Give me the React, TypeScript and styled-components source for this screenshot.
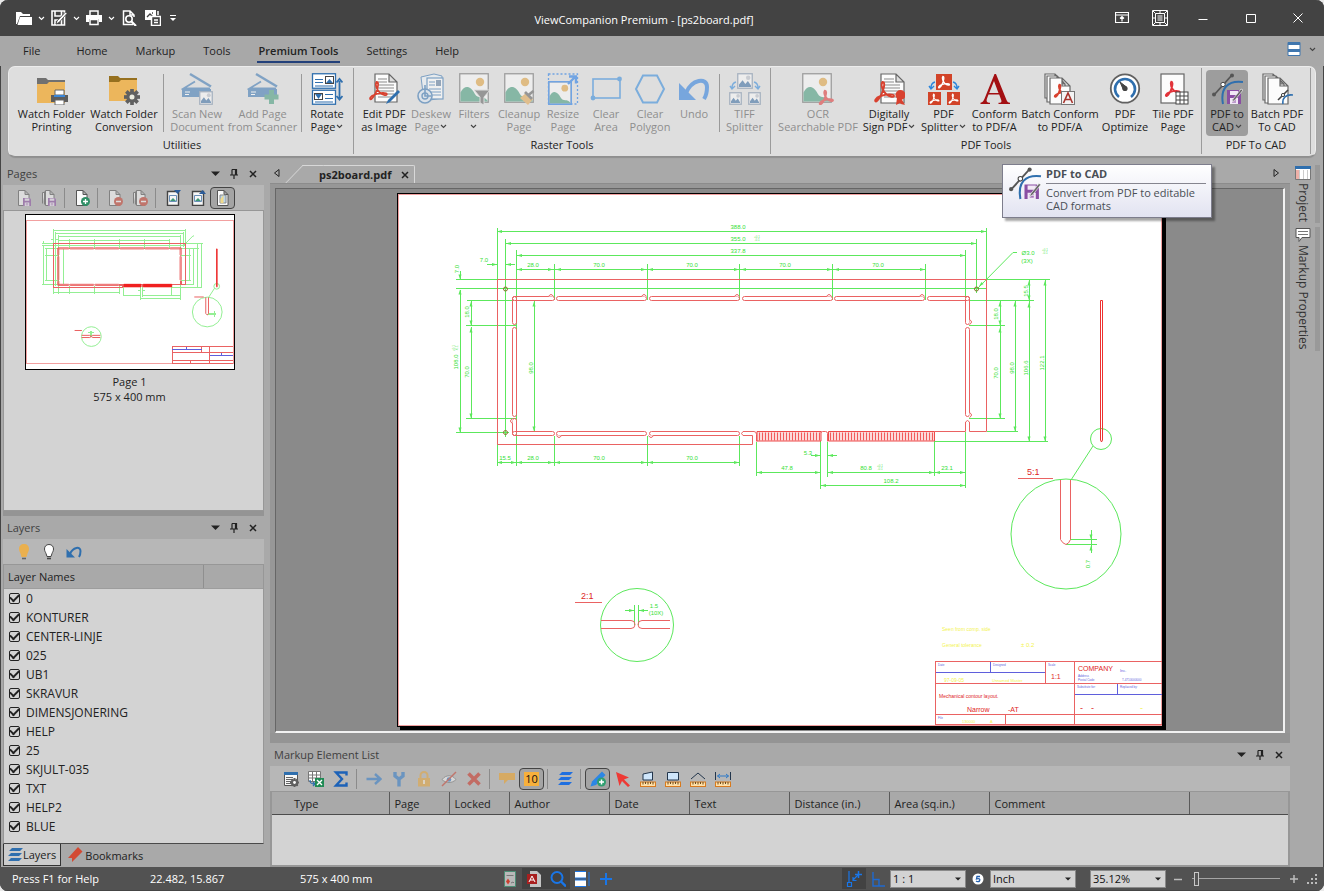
import React, { ReactNode } from "react";
import styled, { createGlobalStyle, css } from "styled-components";

const UI_FONT = `"Open Sans", "Noto Sans", "Liberation Sans", sans-serif`;
const CHROME = "#a9a9a9";
const BAR = "#b7b7b7";
const PAPER = "#d3d3d3";
const EDGE = "#979797";
const INK = "#222222";

const GlobalStyle = createGlobalStyle`
  * { box-sizing: border-box; }
  body { margin: 0; background: #e9e9e9; }
  button, select, input { font: inherit; color: inherit; margin: 0; }
  button { padding: 0; border: 0; background: none; }
  svg { display: block; flex: none; }
`;

/* ---------- window ---------- */

const Window = styled.div`
  display: flex;
  flex-direction: column;
  min-height: 100vh;
  overflow: hidden;
  border-radius: 8px;
  background: ${CHROME};
  box-shadow: inset 1px 0 0 #454545, inset -1px 0 0 #454545;
  font-family: ${UI_FONT};
  font-size: 11px;
  line-height: 13px;
  color: ${INK};
`;

const TitleBar = styled.header`
  display: flex;
  align-items: center;
  height: 36px;
  padding: 0 3px 0 12px;
  background: #434343;
  color: #ffffff;
`;

const Title = styled.h1`
  flex: 1;
  margin: 0;
  padding: 3px 0 0 4px;
  font-size: 11px;
  font-weight: 400;
  text-align: center;
`;

const BarButton = styled.button<{ $w: number }>`
  display: flex;
  align-items: center;
  justify-content: center;
  width: ${(p) => p.$w}px;
  height: 36px;
`;

const MenuBar = styled.nav`
  display: flex;
  align-items: center;
  height: 30px;
  padding: 0 8px 0 9px;
  background: #a8a8a8;
`;

const MenuTab = styled.button<{ $active?: boolean; $wide?: boolean }>`
  height: 24px;
  padding: 5px 2px 4px;
  margin: 0 ${(p) => (p.$wide ? 20 : 12)}px 0 12px;
  border-bottom: 2px solid transparent;
  ${(p) =>
    p.$active &&
    css`
      font-weight: 600;
      border-color: #23407a;
    `}
`;

const MenuEnd = styled.div`
  display: flex;
  align-items: center;
  gap: 8px;
  margin-left: auto;
  padding-bottom: 4px;
`;

/* ---------- ribbon ---------- */

const Ribbon = styled.section`
  display: flex;
  height: 91px;
  margin: 0 8px;
  border: 1px solid #ececec;
  border-bottom-color: #8f8f8f;
  border-radius: 7px;
  background: #dedede;
  box-shadow: 0 1px 1px #909090;
`;

const Group = styled.div`
  display: flex;
  flex-direction: column;
  align-items: center;
  margin: 1px 0 2px;
  padding: 2px 4px 0;
  border-right: 1px solid #9b9b9b;
  &:first-child {
    padding-left: 6px;
  }
`;

const GroupRow = styled.div`
  display: flex;
  align-items: center;
`;

const GroupLabel = styled.div`
  margin-top: 2px;
`;

const Tool = styled.button<{ $w: number; $on?: boolean }>`
  display: flex;
  flex-direction: column;
  align-items: center;
  width: ${(p) => p.$w}px;
  height: 66px;
  padding-top: 3px;
  border-radius: 4px;
  background: ${(p) => (p.$on ? "#9d9d9d" : "transparent")};
  white-space: nowrap;
  &:disabled {
    color: #8e8e8e;
  }
  &:disabled > svg {
    opacity: 0.55;
  }
`;

const ToolText = styled.span`
  display: flex;
  flex-direction: column;
  align-items: center;
  margin-top: 2px;
`;

const ToolLine = styled.span`
  display: flex;
  align-items: center;
  gap: 1px;
  height: 13px;
`;

const Divider = styled.span`
  width: 1px;
  height: 58px;
  margin: 0 3px;
  background: #9a9a9a;
`;

/* ---------- workspace ---------- */

const Workspace = styled.main`
  position: relative;
  display: flex;
  flex: 1;
  padding-left: 3px;
`;

const Dock = styled.aside`
  display: flex;
  flex-direction: column;
  width: 267px;
  padding: 5px 6px 0 0;
`;

const Panel = styled.section<{ $grow?: boolean }>`
  display: flex;
  flex-direction: column;
  flex: ${(p) => (p.$grow ? "1" : "none")};
`;

const PanelHead = styled.div<{ $right?: number }>`
  display: flex;
  align-items: center;
  gap: 7px;
  height: 23px;
  padding: 0 ${(p) => p.$right ?? 5}px 0 4px;
  color: #3f3f3f;
`;

const PanelTitle = styled.h2`
  flex: 1;
  margin: 0;
  font-size: 11px;
  font-weight: 400;
`;

const PanelButton = styled.button`
  display: flex;
  align-items: center;
  justify-content: center;
  width: 12px;
  height: 14px;
`;

const ToolStrip = styled.div`
  display: flex;
  align-items: center;
  height: 25px;
  padding-left: 8px;
  background: ${BAR};
`;

const StripDivider = styled.span`
  width: 1px;
  height: 20px;
  margin: 0 4px 0 3px;
  background: #8b8b8b;
`;

const StripButton = styled.button<{ $on?: boolean }>`
  display: flex;
  align-items: center;
  justify-content: center;
  width: 25px;
  height: 22px;
  border: 1px solid ${(p) => (p.$on ? "#444444" : "transparent")};
  border-radius: 4px;
  background: ${(p) => (p.$on ? "#a4a4a4" : "transparent")};
  &:disabled > svg {
    opacity: 0.55;
  }
`;

const Thumbs = styled.div`
  display: flex;
  flex: 1;
  flex-direction: column;
  align-items: center;
  padding: 3px 8px 0 0;
  border: 1px solid ${EDGE};
  background: ${PAPER};
`;

const Thumb = styled.figure`
  margin: 0;
  text-align: center;
  line-height: 15px;
`;

const ThumbPage = styled.div`
  width: 210px;
  margin-bottom: 4px;
  border: 1px solid #000000;
  background: #ffffff;
`;

const SplitBar = styled.div<{ $h: number }>`
  height: ${(p) => p.$h}px;
  background: #949494;
`;

const LayerBox = styled.div`
  height: 280px;
  border: 1px solid ${EDGE};
  border-bottom-color: #4a4a4a;
  background: ${PAPER};
`;

const LayerTable = styled.table`
  width: 100%;
  border-collapse: collapse;
  th {
    height: 23px;
    padding: 0 4px;
    background: ${CHROME};
    border-bottom: 1px solid #9d9d9d;
    font-weight: 400;
    text-align: left;
  }
  th + th {
    width: 60px;
    border-left: 1px solid #8f8f8f;
  }
  td {
    height: 19px;
    padding: 0 5px;
  }
`;

const CheckLabel = styled.label`
  display: flex;
  align-items: center;
  gap: 6px;
  line-height: 19px;
  font-size: 12px;
`;

const Check = styled.input.attrs({ type: "checkbox" })`
  appearance: none;
  display: grid;
  place-items: center;
  width: 11px;
  height: 11px;
  border: 1px solid #222222;
  border-radius: 2px;
  &:checked::after {
    content: "";
    width: 7px;
    height: 4px;
    margin-bottom: 2px;
    border: solid #222222;
    border-width: 0 0 2px 2px;
    transform: rotate(-45deg);
  }
`;

const DockTabs = styled.div`
  display: flex;
  height: 23px;
`;

const DockTab = styled.button<{ $on?: boolean }>`
  display: flex;
  align-items: center;
  gap: ${(p) => (p.$on ? 0 : 2)}px;
  height: 22px;
  padding: 0 4px 0 ${(p) => (p.$on ? 3 : 6)}px;
  ${(p) =>
    p.$on &&
    css`
      background: #cccccc;
      border: 1px solid #333333;
      border-top: 0;
    `}
`;

const Center = styled.div`
  display: flex;
  flex: 1;
  flex-direction: column;
  min-width: 0;
  padding-top: 6px;
`;

const DocTabs = styled.div`
  display: flex;
  align-items: center;
  height: 20px;
  padding: 0 8px 0 1px;
`;

const ArrowButton = styled.button`
  display: flex;
  align-items: center;
  justify-content: center;
  width: 12px;
  height: 18px;
`;

const DocTab = styled.div`
  position: relative;
  display: flex;
  align-items: center;
  gap: 8px;
  height: 18px;
  margin: 2px auto 0 10px;
  padding: 0 3px 0 26px;
  border-top: 1px solid #d8d8d8;
  border-right: 1px solid #d8d8d8;
  border-top-right-radius: 2px;
  font-weight: 700;
  isolation: isolate;
  &::before {
    content: "";
    position: absolute;
    z-index: -1;
    top: -1px;
    bottom: 0;
    left: 1px;
    width: 20px;
    background: ${CHROME};
    border-top: 1px solid #d8d8d8;
    border-left: 1px solid #d8d8d8;
    transform: skewX(-44deg);
  }
  &::after {
    content: "";
    position: absolute;
    z-index: -2;
    top: -1px;
    left: 0;
    width: 10px;
    height: 1px;
    background: ${CHROME};
  }
`;

const ViewFrame = styled.div`
  display: flex;
  flex: 1;
  padding: 4px 5px 0 5px;
  background: #979797;
  border-top: 1px solid #8c8c8c;
`;

const View = styled.div`
  display: flex;
  flex: 1;
  align-items: center;
  justify-content: center;
  overflow: hidden;
  border: solid;
  border-width: 1px 2px 2px 1px;
  border-color: #666666 #f2f2f2 #f2f2f2 #666666;
  background: #8a8a8a;
`;

const Sheet = styled.div`
  border: 1px solid #000000;
  background: #ffffff;
  box-shadow: 3px 3px 0 #000000;
`;

const ListBox = styled.div`
  height: 76px;
  border: 2px solid ${EDGE};
  border-top-width: 1px;
  background: ${PAPER};
`;

const ElementTable = styled.table`
  width: 100%;
  table-layout: fixed;
  border-collapse: collapse;
  th {
    height: 22px;
    padding: 2px 0 0 5px;
    background: ${CHROME};
    border-bottom: 1px solid #4c4c4c;
    border-left: 1px solid #5a5a5a;
    font-weight: 400;
    text-align: left;
  }
  th:first-child {
    padding-left: 22px;
    border-left: 0;
  }
`;

const SideTabs = styled.aside`
  display: flex;
  flex-direction: column;
  gap: 4px;
  width: 34px;
  padding: 8px 4px 0 5px;
`;

const SideTab = styled.button`
  display: flex;
  flex-direction: column;
  align-items: flex-start;
  gap: 2px;
  padding-bottom: 1px;
  border-right: 5px solid #999999;
`;

const SideText = styled.span`
  writing-mode: vertical-rl;
  width: 16px;
  line-height: 16px;
  font-size: 12px;
  color: #333333;
`;

const Tooltip = styled.div`
  position: absolute;
  z-index: 2;
  top: 7px;
  right: 112px;
  display: flex;
  gap: 4px;
  width: 210px;
  height: 54px;
  padding: 2px 5px 0 5px;
  border: 1px solid #7d7d8c;
  background: linear-gradient(#ffffff, #e2e3f1);
  box-shadow: 3px 3px 2px rgba(0, 0, 0, 0.35);
  color: #4a4f55;
`;

const TipBody = styled.div`
  flex: 1;
  white-space: nowrap;
`;

const TipTitle = styled.strong`
  display: block;
  padding-bottom: 3px;
  margin-bottom: 2px;
  border-bottom: 1px solid #85858f;
`;

/* ---------- status bar ---------- */

const StatusBar = styled.footer`
  display: flex;
  align-items: center;
  height: 24px;
  padding: 0 7px 0 12px;
  background: #525252;
  border-bottom: 1px solid #444444;
  color: #ffffff;
`;

const StatusText = styled.span<{ $w: number }>`
  width: ${(p) => p.$w}px;
`;

const StatusButton = styled.button<{ $on?: boolean }>`
  display: flex;
  align-items: center;
  justify-content: center;
  width: 24px;
  height: 21px;
  background: ${(p) => (p.$on ? "#424242" : "transparent")};
`;

const StatusEnd = styled.div`
  display: flex;
  align-items: center;
  margin-left: auto;
`;

const Combo = styled.span<{ $w: number }>`
  position: relative;
  width: ${(p) => p.$w}px;
  svg {
    position: absolute;
    top: 7px;
    right: 5px;
    pointer-events: none;
  }
`;

const ComboSelect = styled.select`
  appearance: none;
  display: block;
  width: 100%;
  height: 18px;
  padding: 0 2px;
  border: 1px solid #8a8a8a;
  border-radius: 0;
  background: ${PAPER};
  color: #111111;
`;

const Zoom = styled.input.attrs({ type: "range" })`
  appearance: none;
  width: 88px;
  height: 16px;
  margin: 0 9px;
  background: linear-gradient(#a5a5a5, #a5a5a5) center / 100% 1px no-repeat;
  &::-webkit-slider-thumb {
    appearance: none;
    width: 5px;
    height: 14px;
    border: 1px solid #c8c8c8;
    background: #555555;
  }
`;

/* ---------- glyph pieces ---------- */

type IconProps = { children: ReactNode; s?: number; box?: number };
const Icon = ({ children, s = 16, box }: IconProps) => (
  <svg width={s} height={s} viewBox={`0 0 ${box ?? s} ${box ?? s}`} fill="none" aria-hidden="true">
    {children}
  </svg>
);

const Chevron = ({ color = "#444444" }: { color?: string }) => (
  <svg width="7" height="5" viewBox="0 0 7 5" fill="none" aria-hidden="true">
    <path d="M1 1l2.500 2.500L6 1" stroke={color} strokeWidth="1.100" />
  </svg>
);

const Caret = ({ w = 9, color = "#222222" }: { w?: number; color?: string }) => (
  <svg width={w} height={w / 2 + 1} viewBox="0 0 10 5" aria-hidden="true">
    <path d="M0 0h10L5 5z" fill={color} />
  </svg>
);

const Acro = ({ x, y, k, color = "#d8412f", w = 2 }: { x: number; y: number; k: number; color?: string; w?: number }) => (
  <path
    transform={`translate(${x} ${y}) scale(${k})`}
    d="M9 1c2.400 0 2 4 .8 8C8.500 13.500 5 20 2.600 21.500 0 22 .8 18 7 15.800c6-2.200 13.500-2.400 14-.3.4 2-4.500 1.500-8-1.500C9.500 11 6.500 4 9 1z"
    stroke={color}
    strokeWidth={w}
  />
);

const Floppy = ({ x, y, s }: { x: number; y: number; s: number }) => (
  <g transform={`translate(${x} ${y}) scale(${s / 14})`}>
    <path d="M0 0h12l2 2v12H0z" fill="#8a4fa3" />
    <path d="M3 1h8v4H3zM3 8h8v6H3z" fill="#f1e8f5" />
    <path d="M5 10h4M5 12h4" stroke="#8a4fa3" />
  </g>
);

const Landscape = ({ x, y, w, h, blue }: { x: number; y: number; w: number; h: number; blue?: boolean }) => (
  <g transform={`translate(${x} ${y})`}>
    <rect x=".75" y=".75" width={w - 1.5} height={h - 1.5} fill="#fafafa" stroke={blue ? "#7b8fa8" : "#6a6a6a"} strokeWidth="1.300" />
    <circle cx={w * 0.7} cy={h * 0.3} r={w * 0.14} fill={blue ? "#b9bfc9" : "#e0a13c"} />
    {blue ? (
      <path
        d={`M2 ${h - 2}V${h * 0.72}L${w * 0.35} ${h * 0.45}L${w * 0.52} ${h * 0.68}L${w * 0.68} ${h * 0.5}L${w - 2} ${h * 0.78}V${h - 2}z`}
        fill="#34689f"
      />
    ) : (
      <path
        d={`M1.500 ${h - 1.5}V${h * 0.65}C${w * 0.2} ${h * 0.35} ${w * 0.4} ${h * 0.45} ${w * 0.52} ${h * 0.68}S${w * 0.8} ${h * 0.7} ${w - 1.5} ${h * 0.92}V${h - 1.5}z`}
        fill="#3f9878"
      />
    )}
  </g>
);

const PageShape = ({ x, y, w, h, fold = 8, color = "#666666" }: { x: number; y: number; w: number; h: number; fold?: number; color?: string }) => (
  <path
    transform={`translate(${x} ${y})`}
    d={`M0 0H${w - fold}L${w} ${fold}V${h}H0zM${w - fold} 0V${fold}H${w}`}
    fill="#fcfcfc"
    stroke={color}
    strokeWidth="1.200"
  />
);

const Lines = ({ x, y, w, n, gap = 3, color = "#8b8b8b" }: { x: number; y: number; w: number; n: number; gap?: number; color?: string }) => (
  <path d={Array.from({ length: n }, (_, i) => `M${x} ${y + i * gap}h${w}`).join("")} stroke={color} />
);

const Folder = ({ y, tab }: { y: number; tab: string }) => (
  <>
    <path d={`M1 ${y}h9l2 2h17v8H1z`} fill={tab} />
    <path d={`M1 ${y + 6}h10l2-2h16v21H1z`} fill="#ecb65c" />
  </>
);

const Gear = ({ x, y, r, bg }: { x: number; y: number; r: number; bg: string }) => (
  <g transform={`translate(${x} ${y}) scale(${r / 7})`}>
    {[0, 45, 90, 135].map((a) => (
      <rect key={a} x="-1.600" y="-7" width="3.200" height="14" fill="#606060" transform={`rotate(${a})`} />
    ))}
    <circle r="5" fill="#606060" />
    <circle r="2.200" fill={bg} />
  </g>
);

const Scanner = () => (
  <>
    <path d="M9 1l21 12.500" stroke="#3572b0" strokeWidth="2.400" />
    <path d="M14 8.500L2.500 15.500H29" stroke="#3572b0" strokeWidth="1.800" />
    <path d="M1 16h29v8H1z" fill="#3572b0" />
    <path d="M4 19h5M4 21.500h4" stroke="#ffffff" />
  </>
);

const CadMark = () => (
  <>
    <path d="M3 22L21 2" stroke="#555555" strokeWidth="1.800" />
    <path d="M12 31C9 15 17 7 32 9" stroke="#2f6fae" strokeWidth="2" />
    <circle cx="21" cy="2.500" r="2" fill="#555555" />
    <circle cx="3" cy="21.500" r="2" fill="#555555" />
    <circle cx="12" cy="11.500" r="2.200" fill="#ffffff" stroke="#444444" />
    <Floppy x={16} y={17} s={14} />
    <path d="M32 17l-8 10-3 2 1-3 8-10z" fill="#666666" stroke="#ffffff" strokeWidth=".6" />
  </>
);

const UndoMark = ({ color }: { color: string }) => (
  <>
    <path d="M8 20C14 6 29 4 29 14c0 5-1 9-3 12" stroke={color} strokeWidth="4" />
    <path d="M1 10v17h17z" fill={color} />
  </>
);

/* Split icons: one sheet above two smaller ones joined by arrows. */
const PdfTile = ({ x, y, s }: { x: number; y: number; s: number }) => (
  <>
    <rect x={x} y={y} width={s} height={s} fill="#d24328" />
    <Acro x={x + s * 0.12} y={y + s * 0.12} k={s / 29} color="#ffffff" w={2.4} />
  </>
);

const SplitArrows = ({ color }: { color: string }) => (
  <path d="M7 9q-4 1-4 6M1 13l2 3 3-3M25 9q4 1 4 6M26 13l3 3 2-3" stroke={color} strokeWidth="1.400" />
);

const ribbonIcons: Record<string, ReactNode> = {
  watchPrint: (
    <>
      <Folder y={5} tab="#707070" />
      <path d="M19 17h9v5h-9z" fill="#ffffff" stroke="#666666" />
      <path d="M15 22h17v7H15z" fill="#5d5d5d" />
      <path d="M18 22h11v2H18z" fill="#3b86d6" />
      <path d="M19 27h9v5h-9z" fill="#ffffff" stroke="#666666" />
    </>
  ),
  watchConvert: (
    <>
      <Folder y={3} tab="#96701f" />
      <Gear x={24} y={24} r={8} bg="#ecece0" />
    </>
  ),
  scan: (
    <>
      <Scanner />
      <Landscape x={18} y={18} w={14} h={14} blue />
    </>
  ),
  addPage: (
    <>
      <Scanner />
      <path d="M24.500 17v14M17.500 24h14" stroke="#3f9878" strokeWidth="5" />
    </>
  ),
  rotate: (
    <>
      <rect x="1.500" y=".75" width="23" height="14.500" fill="#ffffff" stroke="#2f6fae" strokeWidth="1.300" />
      <rect x="1.500" y="17.250" width="23" height="14" fill="#ffffff" stroke="#2f6fae" strokeWidth="1.300" />
      <rect x="14.500" y="3.500" width="8" height="7" fill="#ffffff" stroke="#444444" />
      <path d="M15 10l3.500-4 3.500 4z" fill="#2f6fae" />
      <path d="M4 6.500h8M4 9.500h8M4 13h18M14 21.500h8M14 25.500h8M4 29h18" stroke="#2f6fae" strokeWidth="1.200" />
      <rect x="3.500" y="20.500" width="8" height="6" fill="#ffffff" stroke="#444444" />
      <path d="M4 21h7l-3.500 5z" fill="#2f6fae" />
      <path d="M28.500 8v17M25.500 9.500L28.500 6l3 3.500M25.500 23l3 3.500 3-3.500" stroke="#2f6fae" strokeWidth="1.800" />
    </>
  ),
  editPdf: (
    <>
      <PageShape x={7} y={1} w={22} h={28} />
      <Lines x={10} y={6} w={9} n={2} />
      <Lines x={10} y={12} w={16} n={5} />
      <Acro x={1} y={8} k={0.85} />
      <path d="M30 17l2 2-10 10-4 2 2-4z" fill="#2f6fae" />
    </>
  ),
  deskew: (
    <>
      <path d="M6 4l13-3 8 2v22L9 28z" fill="#eef4fb" stroke="#2f6fae" />
      <rect x="12" y="5" width="16" height="21" fill="#ffffff" stroke="#2f6fae" strokeWidth="1.200" />
      <Lines x={14} y={9} w={6} n={2} color="#2f6fae" />
      <Lines x={14} y={16} w={12} n={3} color="#2f6fae" />
      <rect x="21" y="7" width="5" height="6" fill="#58779c" />
      <circle cx="10" cy="23" r="7" fill="#dbe6f3" stroke="#2f6fae" strokeWidth="1.600" />
      <circle cx="10" cy="23" r="3" stroke="#2f6fae" strokeWidth="1.400" />
      <path d="M10 12v11h6" stroke="#2f6fae" strokeWidth="1.600" />
    </>
  ),
  filters: (
    <>
      <Landscape x={1} y={0} w={30} h={30} />
      <path d="M16 17h16l-6 7v8l-4-2v-6z" fill="#5d5d5d" stroke="#dedede" />
    </>
  ),
  cleanup: (
    <>
      <Landscape x={1} y={0} w={30} h={30} />
      <path d="M17 25l8 7 5-6-7-6z" fill="#e2a54b" />
      <path d="M22 19l7 7M25.500 22l5-4" stroke="#5d5d5d" strokeWidth="2.800" />
    </>
  ),
  resize: (
    <>
      <rect x="1.500" y="1" width="29" height="30" stroke="#1976e8" strokeDasharray="2 2" strokeWidth="1.300" />
      <Landscape x={1} y={8} w={24} h={24} />
      <rect x="1.750" y="8.750" width="22.500" height="22.500" stroke="#1976e8" strokeWidth="1.500" />
      <path d="M21 11l7-7M22 3.500h7v7" stroke="#1976e8" strokeWidth="2.400" />
    </>
  ),
  clearArea: (
    <>
      <rect x="3" y="6" width="27" height="19" stroke="#2c86dc" strokeWidth="1.600" />
      <circle cx="29.500" cy="6" r="2.400" fill="#2c86dc" />
      <circle cx="3" cy="25" r="2.400" fill="#2c86dc" />
    </>
  ),
  clearPolygon: <path d="M9 2.500h14L30 16l-7 13.500H9L2 16z" stroke="#2c86dc" strokeWidth="2" />,
  undo: <UndoMark color="#2479dd" />,
  tiffSplit: (
    <>
      <SplitArrows color="#2c86dc" />
      <Landscape x={8} y={0} w={16} h={16} blue />
      <Landscape x={0} y={19} w={13} h={13} blue />
      <Landscape x={19} y={19} w={13} h={13} blue />
    </>
  ),
  ocr: (
    <>
      <Landscape x={0} y={0} w={30} h={30} />
      <Acro x={17} y={17} k={0.66} color="#e03030" w={3} />
    </>
  ),
  sign: (
    <>
      <PageShape x={8} y={1} w={23} h={29} />
      <Lines x={11} y={6} w={10} n={2} />
      <Lines x={11} y={12} w={16} n={5} />
      <Acro x={1} y={8} k={0.95} />
      <path d="M24 25l-1 7 4-2 1 1v-6M28 25l4 7-4-1z" fill="#d8412f" />
      <circle cx="27.500" cy="22" r="5" fill="#d8412f" />
    </>
  ),
  pdfSplit: (
    <>
      <SplitArrows color="#2c86dc" />
      <PdfTile x={8} y={1} s={16} />
      <PdfTile x={0} y={19} s={13} />
      <PdfTile x={19} y={19} s={13} />
    </>
  ),
  conform: (
    <path
      d="M15.500 1h1.500l10.500 26c.6 1.600 1.500 2.600 3.500 2.800V31H19.500v-1.200c2.600 0 3.500-.8 2.700-2.800l-2-5.500H9.500L8 25.500c-1 3 0 4.100 3 4.300V31H1.500v-1.200c2.200-.4 3-1.600 4-4zM15 8l-4.800 12h9.300z"
      fill="#a30f12"
      fillRule="evenodd"
    />
  ),
  batchConform: (
    <>
      <PageShape x={1} y={1} w={18} h={24} />
      <PageShape x={3} y={3} w={18} h={26} />
      <PageShape x={6} y={5} w={20} h={26} />
      <Acro x={10} y={11} k={0.6} w={3} />
      <rect x="17.500" y="18.500" width="13" height="13" fill="#f4f4f4" stroke="#777777" />
      <path d="M19.500 30L24 20l4.500 10M21 26.500h6" stroke="#a8332c" strokeWidth="1.600" />
    </>
  ),
  optimize: (
    <>
      <circle cx="16" cy="15.500" r="14.200" fill="#ffffff" stroke="#616161" strokeWidth="1.800" />
      <path d="M10 24A10 10 0 1 1 22 24" stroke="#2f6fae" strokeWidth="2.600" />
      <path d="M11 9l6.500 5-3 3z" fill="#444444" stroke="#444444" />
      <circle cx="16" cy="15.500" r="2.600" fill="#444444" />
    </>
  ),
  tile: (
    <>
      <rect x="4" y="1" width="23" height="29" fill="#fcfcfc" stroke="#666666" strokeWidth="1.200" />
      <Acro x={8} y={8} k={0.7} color="#e2333a" w={2.6} />
      <rect x="19" y="19" width="12" height="12" fill="#ffffff" stroke="#444444" />
      <path d="M23 19v12M27 19v12M19 23h12M19 27h12" stroke="#444444" />
    </>
  ),
  cad: <CadMark />,
  batchCad: (
    <>
      <PageShape x={2} y={1} w={18} h={26} />
      <PageShape x={4} y={3} w={19} h={27} />
      <PageShape x={7} y={5} w={20} h={26} />
      <path d="M17 27l10-10" stroke="#444444" strokeWidth="1.600" />
      <path d="M22 31c-1-6 3-10 10-9" stroke="#2f6fae" strokeWidth="1.600" />
      <circle cx="22" cy="22" r="1.600" fill="#ffffff" stroke="#444444" />
    </>
  ),
};

const Pg = ({ children }: { children?: ReactNode }) => (
  <>
    <path d="M2.500.5h6.500l4 4v11h-10.500zM9 .5v4h4" fill="#fbfbfb" stroke="#555555" />
    {children}
  </>
);

const PgStack = ({ children }: { children?: ReactNode }) => (
  <>
    <path d="M1.500 13.500v-11H4M4.500.500H9l4 4v11H4.500zM9 .5v4h4M3.500 14.500V1.500" fill="#fbfbfb" stroke="#555555" />
    {children}
  </>
);

const Ruler = () => (
  <>
    <rect x=".5" y="11" width="15" height="4.500" fill="#ffe0a8" stroke="#d87a1e" />
    <path d="M3 11v2.500M5.500 11v2M8 11v2.500M10.500 11v2M13 11v2.500" stroke="#6b4a1c" />
  </>
);

const Minus = () => (
  <>
    <circle cx="11.500" cy="11.500" r="4.500" fill="#c9402f" />
    <path d="M9 11.500h5" stroke="#ffffff" strokeWidth="1.500" />
  </>
);

const stackPath = "M5 1h11l-3 3H2zM4 6h11l-3 3H1zM4 11h11l-3 3H1z";

const smallIcons: Record<string, ReactNode> = {
  savePage: <Pg><Floppy x={7} y={8} s={8} /></Pg>,
  savePages: <PgStack><Floppy x={7} y={8} s={8} /></PgStack>,
  addPage: (
    <Pg>
      <circle cx="11.500" cy="11.500" r="4.500" fill="#2f8f66" />
      <path d="M11.500 9v5M9 11.500h5" stroke="#ffffff" strokeWidth="1.300" />
    </Pg>
  ),
  delPage: <Pg><Minus /></Pg>,
  delPages: <PgStack><Minus /></PgStack>,
  imgDown: (
    <>
      <path d="M2.500 1.500h11v14h-11z" fill="#f6f6f6" stroke="#444444" strokeWidth="1.400" />
      <path d="M4.500 5.500h7v6h-7z" stroke="#6a8fb8" />
      <path d="M5 11l3-3 3 3z" fill="#3f9878" />
      <path d="M9 0h7l-3.500 4z" fill="#2b5c9a" />
    </>
  ),
  imgUp: (
    <>
      <path d="M2.500 1.500h11v14h-11z" fill="#f6f6f6" stroke="#444444" strokeWidth="1.400" />
      <path d="M4.500 5.500h7v6h-7z" stroke="#6a8fb8" />
      <path d="M5 11l3-3 3 3z" fill="#3f9878" />
      <path d="M9 4h7l-3.500-4z" fill="#2b5c9a" />
    </>
  ),
  pageView: (
    <Pg>
      <path d="M5 5h6v8H5z" fill="#bcd6ea" stroke="#888888" />
      <path d="M5.500 9l3-4v8h-3z" fill="#f0d98a" />
    </Pg>
  ),
  bulbOn: (
    <>
      <path d="M8 0C5 0 3 2 3 5c0 2 1 3 1.500 4.500L5.500 13h5l1-3.500C12 8 13 7 13 5c0-3-2-5-5-5z" fill="#eab04f" />
      <path d="M6 14.500h4" stroke="#666666" strokeWidth="1.600" />
    </>
  ),
  bulbOff: (
    <>
      <path d="M8 .5C5 .5 3.500 2.500 3.500 5c0 2 1 3 1.500 4.500L6 12.500h4l1-3C11.500 8 12.500 7 12.500 5 12.500 2.500 11 .5 8 .5z" fill="#ffffff" stroke="#444444" />
      <path d="M6 14.500h4" stroke="#444444" strokeWidth="1.600" />
    </>
  ),
  undo: (
    <g transform="scale(.5)">
      <UndoMark color="#2f6fae" />
    </g>
  ),
  listSettings: (
    <>
      <path d="M1.500 1.500h13v13h-13z" fill="#f7f7f7" stroke="#555555" />
      <path d="M1 1h14v3H1z" fill="#2f6fae" />
      <Lines x={3} y={6.5} w={7} n={4} gap={2} color="#666666" />
      <Gear x={11.5} y={11.5} r={4.5} bg="#ffffff" />
    </>
  ),
  excel: (
    <>
      <path d="M.5.500h12v10H.5zM.5 4h12M.5 7h12M4.500.500v10M8.500.500v10" fill="#ffffff" stroke="#777777" />
      <path d="M2 9c0 3 1 4 5 4M5 11l2 2-2 2" stroke="#2f6fae" strokeWidth="1.300" />
      <path d="M7 7h9v9H7z" fill="#1f8a54" />
      <path d="M9 9l5 5M14 9l-5 5" stroke="#ffffff" strokeWidth="1.400" />
    </>
  ),
  sigma: <path d="M13.500 4.500V1.500H3L9 8l-6 6.500h10.500v-3" stroke="#1c62b8" strokeWidth="2.400" />,
  arrowRight: <path d="M.5 8h14M9 3l5.500 5L9 13" stroke="#2c79c8" strokeWidth="2.400" />,
  wrench: <path d="M4 1v4l4 3 4-3V1M8 6v9.500" stroke="#2c79c8" strokeWidth="3.400" />,
  lock: (
    <>
      <path d="M4.500 8V4.500a3.500 3.500 0 0 1 7 0V8" stroke="#e7a63a" strokeWidth="2" />
      <path d="M2 7h12v8.500H2z" fill="#e7a63a" />
      <path d="M8 9v4" stroke="#ffffff" strokeWidth="1.500" />
    </>
  ),
  eyeOff: (
    <>
      <path d="M1 8.500c4-5 10-5 14 0-4 4-10 4-14 0z" fill="#f2f2f2" stroke="#777777" />
      <circle cx="8" cy="8.500" r="2.300" fill="#2c79c8" />
      <path d="M1 15L15 1" stroke="#c9402f" strokeWidth="1.500" />
    </>
  ),
  remove: <path d="M2.500 2.500l11 11M13.500 2.500l-11 11" stroke="#cc2f22" strokeWidth="3.600" />,
  comment: <path d="M0 2h16v7H9l-4 4V9H0z" fill="#f0a020" />,
  layers: <path d={stackPath} fill="#1f6fe0" />,
  pencil: (
    <>
      <path d="M.5 15.500l1.500-5L12 .5 15.500 4 6 14z" fill="#2c86e4" />
      <circle cx="11.500" cy="11" r="4.500" fill="#2f9f70" />
      <path d="M11.500 8.500v5M9 11h5" stroke="#ffffff" strokeWidth="1.500" />
    </>
  ),
  cursor: <path d="M1 1l13 5.500-5 2 6 6-2 1.500-6-6-2.500 5z" fill="#ee3a35" />,
  polyArea: <><path d="M3 9V3l9.500-2v8z" fill="#cfe6fb" stroke="#23364c" /><Ruler /></>,
  rectArea: <><path d="M2.500 1.500h11V9h-11z" fill="#cfe6fb" stroke="#23364c" /><Ruler /></>,
  angle: <><path d="M1 8l7-6 7 6" stroke="#23364c" /><Ruler /></>,
  measure: <><path d="M.5 1v8M15.500 1v8" stroke="#23364c" /><path d="M2.500 5h11M5 3L2.500 5 5 7M11 3l2.500 2L11 7" stroke="#2c79c8" /><Ruler /></>,
};

const CountBadge = styled.span`
  width: 15px;
  height: 14px;
  background: #f7b03b;
  color: #111111;
  line-height: 14px;
  text-align: center;
`;

/* ---------- technical drawing ---------- */

const GREEN = "#5ce85c";
const RED = "#ea6262";
const BLUE = "#5f5fdc";
const YELLOW = "#f3f350";

const greenLines =
  "M497.500 228V466M986.500 228V280M497.500 231.500H986.500M505.500 239V437M976.500 239V293M506 243.500H976M516.500 250V466M965.500 250V298M517 255.500H965" +
  "M517 269.500H925M554.500 264V300M647.500 264V300M739.500 264V300M832.500 264V300M925.500 264V300" +
  "M487 264.500H497M506 264.500H515M456 279.500H497M460.500 271V279M456 288.500H987M460.500 290V432M467 300.500H514M466 325.500H517M471.500 301V325M471.500 327V418M466 418.500H517M456 432.500H509" +
  "M534.500 301V431M497 462.500H739M554.500 436V466M647.500 436V466M739.500 436V466" +
  "M756.500 442V476M820.500 432V489M827.500 442V477M934.500 441V476M965.500 432V488M756 472.500H820M828 472.500H965M821 485.500H965M811 455.500H820M828 455.500H837" +
  "M987 279.500H1050M969 300.500H1034M969 325.500H1005M969 418.500H1005M987 431.500H1018M935 441.500H1048M1000.500 301V418M1015.500 301V431M1029.500 280V441M1045.500 280V441" +
  "M1070 539.500H1097M1066 544.500H1097M1091.500 530V553M634.500 605V625M638.500 605V625M625 610.500H634M639 610.500H648";

const slots: [number, number, number, number][] = [
  [512, 297, 42, 4], [556, 297, 90, 4], [649, 297, 90, 4], [742, 297, 90, 4], [834, 297, 90, 4], [927, 297, 42, 4],
  [512, 297, 4, 28], [512, 328, 4, 89], [512, 419, 4, 17], [965, 297, 4, 28], [965, 328, 4, 89],
  [512, 432, 42, 4], [556, 432, 90, 4], [649, 432, 90, 4],
];

/* Small bulges at the slot ends: x, y, rotation of the half circle. */
const hooks: [number, number, number][] = [
  [551, 296.5, 0], [644, 296.5, 0], [737, 296.5, 0], [829, 296.5, 0], [922, 296.5, 0],
  [969.5, 322, 90], [969.5, 415, 90], [512.5, 421, 270], [559, 435.5, 180], [651, 435.5, 180],
];

const arrows: [number, number, number][] = [
  [497, 231, 180], [986, 231, 0], [506, 243, 180], [976, 243, 0], [517, 255, 180], [965, 255, 0],
  [517, 269, 180], [553, 269, 0], [556, 269, 180], [646, 269, 0], [648, 269, 180], [739, 269, 0], [741, 269, 180], [832, 269, 0], [834, 269, 180], [925, 269, 0],
  [497, 264, 0], [506, 264, 180], [460, 279, 90], [460, 289, 270], [460, 432, 90], [471, 301, 270], [471, 325, 90], [471, 327, 270], [471, 418, 90],
  [534, 301, 270], [534, 431, 90], [497, 462, 180], [516, 462, 0], [517, 462, 180], [553, 462, 0], [555, 462, 180], [646, 462, 0], [648, 462, 180], [739, 462, 0],
  [757, 472, 180], [820, 472, 0], [828, 472, 180], [934, 472, 0], [935, 472, 180], [965, 472, 0], [821, 485, 180], [965, 485, 0], [820, 455, 0], [828, 455, 180],
  [1000, 301, 270], [1000, 325, 90], [1000, 327, 270], [1000, 418, 90], [1015, 301, 270], [1015, 431, 90], [1029, 280, 270], [1029, 300, 90], [1029, 302, 270], [1029, 441, 90],
  [1045, 280, 270], [1045, 441, 90], [1091, 539, 90], [1091, 545, 270], [634, 610, 0], [639, 610, 180], [979, 286, 135],
];

const dims: [number, number, string, boolean?][] = [
  [738, 229, "388.0"], [738, 241, "355.0"], [738, 253, "337.8"], [484, 262, "7.0"], [533, 267, "28.0"], [599, 267, "70.0"], [692, 267, "70.0"],
  [785, 267, "70.0"], [878, 267, "70.0"], [505, 460, "15.5"], [533, 460, "28.0"], [599, 460, "70.0"], [692, 460, "70.0"],
  [787, 470, "47.8"], [866, 470, "80.8"], [947, 470, "23.1"], [891, 483, "108.2"], [808, 455, "5.3"], [1028, 255, "Ø3.0"], [1027, 263, "(3X)"],
  [654, 608, "1.5"], [656, 615, "(10X)"],
  [459, 269, "7.0", true], [458, 362, "108.0", true], [469, 312, "18.0", true], [469, 372, "70.0", true], [533, 368, "98.0", true],
  [998, 314, "18.0", true], [998, 373, "70.0", true], [1014, 368, "98.0", true], [1028, 291, "15.5", true], [1028, 368, "106.6", true],
  [1044, 363, "122.1", true], [1090, 564, "0.7", true],
];

const tolerances: [number, number, boolean?][] = [[757, 238], [1045, 251], [880, 467], [455, 348, true]];

const notes: [number, number, string, string, number][] = [
  [942, 631, "Seen from comp. side", YELLOW, 5], [942, 647, "General tolerance", YELLOW, 5], [1021, 647, "± 0.2", YELLOW, 6],
  [938, 666, "Date", BLUE, 3], [993, 666, "Designed", BLUE, 3], [1048, 666, "Scale", BLUE, 3], [944, 682, "97-09-05", YELLOW, 5], [992, 682, "Unnamed Master", YELLOW, 4],
  [1051, 679, "1:1", "#e02525", 7], [1078, 671, "COMPANY", "#e02525", 7], [1120, 672, "Inc.", BLUE, 4], [1078, 677, "Address", BLUE, 3], [1078, 681, "Postal Code", BLUE, 3],
  [1122, 681, "T-4710000000", BLUE, 3], [1077, 688, "Substitute for:", BLUE, 3], [1120, 688, "Replaced by:", BLUE, 3],
  [939, 698, "Mechanical contour layout.", "#e02525", 5], [967, 712, "Narrow", "#e02525", 7], [1008, 712, "-AT", "#e02525", 7],
  [1080, 711, "-", "#e02525", 9], [1091, 711, "-", "#e02525", 9], [1140, 711, "-", YELLOW, 9], [938, 719, "File", BLUE, 3], [962, 723, "130000", YELLOW, 4], [990, 723, "A", YELLOW, 4],
  [1027, 475, "5:1", "#dd1f1f", 9], [581, 599, "2:1", "#dd1f1f", 9],
];

const comb = (from: number, count: number) =>
  Array.from({ length: count }, (_, i) => `M${from + i * 3}.500 432.500V440.500`).join("");

const Drawing = ({ detail }: { detail?: boolean }) => {
  const ve = "non-scaling-stroke" as const;
  return (
    <g fill="none" strokeWidth="1" fontFamily="Liberation Sans, sans-serif">
      <rect x="398.500" y="194.500" width="763" height="531" stroke="#f2a0a0" vectorEffect={ve} shapeRendering="crispEdges" />
      <g opacity={detail ? 1 : 0.65}>
        <path d={greenLines} stroke={GREEN} vectorEffect={ve} shapeRendering="crispEdges" />
        <path d="M1017 252.500h-4L978 288M1093 446l-22 34" stroke={GREEN} vectorEffect={ve} />
        <g stroke={GREEN}>
          <circle cx="1101" cy="439" r="10.500" vectorEffect={ve} />
          <circle cx="1066" cy="534" r="55" vectorEffect={ve} />
          <circle cx="637" cy="625" r="36.500" vectorEffect={ve} />
        </g>
      </g>
      <path
        d="M752.500 444.500H497.500V279.500H986.500V431.500H969.500V422q-2-3-4 0V431.500H934.500M752.500 444.500V435.500H743q-3-2 0-4H754q2.500 0 2.500 3v7M820.500 441.500v-8q0-2 2-2h3q2 0 2 2v8"
        stroke={RED}
        shapeRendering={detail ? "auto" : "crispEdges"}
        vectorEffect={ve}
      />
      <g stroke={RED}>
        {slots.map(([x, y, w, h]) => (
          <rect key={`${x}-${y}-${w}`} x={x + 0.5} y={y - 0.5} width={w} height={h} rx="2" vectorEffect={ve} />
        ))}
        {detail &&
          hooks.map(([x, y, a]) => (
            <path key={`${x}-${y}`} transform={`translate(${x} ${y}) rotate(${a})`} d="M-2.500 0q2.500-4 5 0" fill="#ffffff" />
          ))}
      </g>
      <g stroke="#f25a5a" vectorEffect={ve}>
        <path d="M757 431.500h64v9.500h-64zM828.500 431.500h106v9.500h-106z" fill="#fcdada" stroke="#ee4a4a" vectorEffect={ve} />
        <path d={comb(759, 21) + comb(830, 35)} vectorEffect={ve} />
        {!detail && <path d="M757 436h64M829 436h106" stroke="#f02020" strokeWidth="3" vectorEffect={ve} />}
      </g>
      <g stroke={RED}>
        <path d="M1100.500 300.500h2V440l-1 2-1-2z" stroke="#ee3030" vectorEffect={ve} />
        <path d="M1060.500 480V539.500q2 4 5.500 5 3-1 4.500-5V480" vectorEffect={ve} />
        <path d="M601 620.500H631q4 0 4 4t-4 4H601M670 620.500H642q-4 0-4 4t4 4H670M575 602.500H602M1018 478.500H1053" vectorEffect={ve} />
        <path
          d="M935.500 725V661.500H1162M935 683.500H1162M1074.500 661V725M1045.500 661V683M935 714.500H1162M1005.500 714V725M935 724.500H1162"
          shapeRendering="crispEdges"
          vectorEffect={ve}
        />
      </g>
      <path d="M936 672.500H1045M990.500 662V672M1075 694.500H1162M1117.500 684V694" stroke={BLUE} shapeRendering="crispEdges" vectorEffect={ve} />
      {detail && (
        <>
          <g stroke="#8f7030">
            <circle cx="505.500" cy="289" r="2" />
            <circle cx="976.500" cy="289" r="2" />
            <circle cx="505.500" cy="432.500" r="2" />
          </g>
          <g fill={GREEN}>
            {arrows.map(([x, y, a]) => (
              <path key={`${x}-${y}-${a}`} transform={`translate(${x} ${y + 0.5}) rotate(${a})`} d="M0 0l-5-1.500v3z" />
            ))}
          </g>
          <g fill="#34e034" fontSize="6" textAnchor="middle">
            {dims.map(([x, y, t, v]) => (
              <text key={`${x}-${y}`} transform={`translate(${x} ${y})${v ? " rotate(-90)" : ""}`}>
                {t}
              </text>
            ))}
          </g>
          <g fill={GREEN} fontSize="3" textAnchor="middle">
            {tolerances.map(([x, y, v]) => (
              <g key={`${x}-${y}`} transform={`translate(${x} ${y})${v ? " rotate(-90)" : ""}`}>
                <text>+0.1</text>
                <text y="3">-0.1</text>
              </g>
            ))}
          </g>
          {notes.map(([x, y, t, c, s]) => (
            <text key={`${x}-${y}`} x={x} y={y} fill={c} fontSize={s}>
              {t}
            </text>
          ))}
        </>
      )}
    </g>
  );
};

/* ---------- content ---------- */

type ToolSpec = { icon: string; lines: string[]; w: number; off?: boolean; drop?: boolean; on?: boolean } | "sep";

const ribbon: { label: string; tools: ToolSpec[] }[] = [
  {
    label: "Utilities",
    tools: [
      { icon: "watchPrint", lines: ["Watch Folder", "Printing"], w: 73 },
      { icon: "watchConvert", lines: ["Watch Folder", "Conversion"], w: 72 },
      "sep",
      { icon: "scan", lines: ["Scan New", "Document"], w: 60, off: true },
      { icon: "addPage", lines: ["Add Page", "from Scanner"], w: 71, off: true },
      "sep",
      { icon: "rotate", lines: ["Rotate", "Page"], w: 44, drop: true },
    ],
  },
  {
    label: "Raster Tools",
    tools: [
      { icon: "editPdf", lines: ["Edit PDF", "as Image"], w: 52 },
      { icon: "deskew", lines: ["Deskew", "Page"], w: 42, off: true, drop: true },
      { icon: "filters", lines: ["Filters", ""], w: 44, off: true, drop: true },
      { icon: "cleanup", lines: ["Cleanup", "Page"], w: 46, off: true },
      { icon: "resize", lines: ["Resize", "Page"], w: 42, off: true },
      { icon: "clearArea", lines: ["Clear", "Area"], w: 44, off: true },
      { icon: "clearPolygon", lines: ["Clear", "Polygon"], w: 44, off: true },
      { icon: "undo", lines: ["Undo"], w: 44, off: true },
      "sep",
      { icon: "tiffSplit", lines: ["TIFF", "Splitter"], w: 43, off: true },
    ],
  },
  {
    label: "PDF Tools",
    tools: [
      { icon: "ocr", lines: ["OCR", "Searchable PDF"], w: 86, off: true },
      { icon: "sign", lines: ["Digitally", "Sign PDF"], w: 56, drop: true },
      { icon: "pdfSplit", lines: ["PDF", "Splitter"], w: 53, drop: true },
      { icon: "conform", lines: ["Conform", "to PDF/A"], w: 49 },
      { icon: "batchConform", lines: ["Batch Conform", "to PDF/A"], w: 82 },
      { icon: "optimize", lines: ["PDF", "Optimize"], w: 48 },
      { icon: "tile", lines: ["Tile PDF", "Page"], w: 48 },
    ],
  },
  {
    label: "PDF To CAD",
    tools: [
      { icon: "cad", lines: ["PDF to", "CAD"], w: 42, drop: true, on: true },
      { icon: "batchCad", lines: ["Batch PDF", "To CAD"], w: 58 },
    ],
  },
];

const layerNames = ["0", "KONTURER", "CENTER-LINJE", "025", "UB1", "SKRAVUR", "DIMENSJONERING", "HELP", "25", "SKJULT-035", "TXT", "HELP2", "BLUE"];

const columns: [string, number?][] = [
  ["Type", 117], ["Page", 60], ["Locked", 60], ["Author", 100], ["Date", 80], ["Text", 100], ["Distance (in.)", 100], ["Area (sq.in.)", 100], ["Comment", 200], ["", undefined],
];

type StripItem = { icon: string; label: string; off?: boolean; on?: boolean } | "sep";

const pageTools: StripItem[] = [
  { icon: "savePage", label: "Save page", off: true }, { icon: "savePages", label: "Save pages", off: true }, "sep",
  { icon: "addPage", label: "Add page" }, "sep",
  { icon: "delPage", label: "Delete page", off: true }, { icon: "delPages", label: "Delete pages", off: true }, "sep",
  { icon: "imgDown", label: "Smaller thumbnails" }, { icon: "imgUp", label: "Larger thumbnails" }, { icon: "pageView", label: "Show thumbnails", on: true },
];

const layerTools: StripItem[] = [
  { icon: "bulbOn", label: "All layers on" }, { icon: "bulbOff", label: "All layers off" }, { icon: "undo", label: "Reset layers" },
];

const markupTools: StripItem[] = [
  { icon: "listSettings", label: "List settings" }, { icon: "excel", label: "Export" }, { icon: "sigma", label: "Sum" }, "sep",
  { icon: "arrowRight", label: "Go to", off: true }, { icon: "wrench", label: "Properties", off: true }, { icon: "lock", label: "Lock", off: true },
  { icon: "eyeOff", label: "Hide", off: true }, { icon: "remove", label: "Delete", off: true }, "sep",
  { icon: "comment", label: "Comment", off: true }, { icon: "count", label: "Count", on: true }, "sep",
  { icon: "layers", label: "Layers" }, "sep",
  { icon: "pencil", label: "Add markup", on: true }, { icon: "cursor", label: "Select" }, { icon: "polyArea", label: "Polygon area" },
  { icon: "rectArea", label: "Rectangle area" }, { icon: "angle", label: "Path length" }, { icon: "measure", label: "Distance" },
];

const Strip = ({ items }: { items: StripItem[] }) => (
  <ToolStrip>
    {items.map((it, i) =>
      it === "sep" ? (
        <StripDivider key={i} />
      ) : (
        <StripButton key={i} $on={it.on} disabled={it.off} aria-label={it.label}>
          {it.icon === "count" ? <CountBadge>10</CountBadge> : <Icon>{smallIcons[it.icon]}</Icon>}
        </StripButton>
      ),
    )}
  </ToolStrip>
);

const Header = ({ title, right }: { title: string; right?: number }) => (
  <PanelHead $right={right}>
    <PanelTitle>{title}</PanelTitle>
    <PanelButton aria-label={`${title} options`}>
      <Caret />
    </PanelButton>
    <PanelButton aria-label={`Pin ${title}`}>
      <Icon s={10}>
        <path d="M3 .5h4.500v5M3 .5v5M6.500 1v5M1 6h8M5 6v4" stroke="#222222" strokeWidth="1.200" />
      </Icon>
    </PanelButton>
    <PanelButton aria-label={`Close ${title}`}>
      <Cross />
    </PanelButton>
  </PanelHead>
);

const Cross = () => (
  <Icon s={8}>
    <path d="M1 1l6 6M7 1L1 7" stroke="#222222" strokeWidth="1.500" />
  </Icon>
);

const DropChevron = ({ label }: { label: string }) => (
  <BarButton $w={11} aria-label={label}>
    <Chevron color="#ffffff" />
  </BarButton>
);

const Field = ({ label, value, w }: { label: string; value: string; w: number }) => (
  <Combo $w={w}>
    <ComboSelect aria-label={label} defaultValue={value}>
      <option>{value}</option>
    </ComboSelect>
    <Caret w={6} />
  </Combo>
);

export default function App() {
  return (
    <Window>
      <GlobalStyle />
      <TitleBar>
        <BarButton $w={24} aria-label="Open">
          <Icon>
            <path d="M0 14V2h5l2 2h7v2H4l-3 8z" fill="#ffffff" />
            <path d="M4 7h12v8H1.500z" fill="#ffffff" />
          </Icon>
        </BarButton>
        <DropChevron label="Open options" />
        <BarButton $w={24} aria-label="Save">
          <Icon>
            <path d="M1 1h12.500v14H1zM4 1v5h6.500V1M4 15v-5h6.500v5" stroke="#ffffff" strokeWidth="1.600" />
            <path d="M14.500 2l1.500 1.500-8 9-3 1.500 1-3z" fill="#ffffff" stroke="#434343" strokeWidth=".8" />
          </Icon>
        </BarButton>
        <DropChevron label="Save options" />
        <BarButton $w={24} aria-label="Print">
          <Icon>
            <path d="M4 5V1h8v4" stroke="#ffffff" strokeWidth="1.500" />
            <path d="M0 5h16v7h-3V9H3v3H0z" fill="#ffffff" />
            <path d="M4 9.500h8v5H4z" stroke="#ffffff" strokeWidth="1.500" />
          </Icon>
        </BarButton>
        <DropChevron label="Print options" />
        <BarButton $w={24} aria-label="Print preview">
          <Icon>
            <path d="M12 14.500H2.500V1H9l4 4v2M9 1v4h4" stroke="#ffffff" strokeWidth="1.500" />
            <circle cx="8" cy="9" r="3.200" stroke="#ffffff" strokeWidth="1.600" />
            <path d="M10.500 11.500L15 16" stroke="#ffffff" strokeWidth="2.200" />
          </Icon>
        </BarButton>
        <BarButton $w={24} aria-label="Copy region">
          <Icon>
            <path d="M0 0h11v10H0z" fill="#ffffff" />
            <path d="M2 7l3-3 3 3M7 3h1" stroke="#434343" strokeWidth="1.300" />
            <path d="M6.500 6.500h9v9h-9z" fill="#434343" stroke="#ffffff" strokeWidth="1.500" />
            <path d="M9 10h4M9 12.500h4M13 1v4" stroke="#ffffff" strokeWidth="1.500" />
          </Icon>
        </BarButton>
        <BarButton $w={16} aria-label="Customize toolbar">
          <Icon s={6}>
            <path d="M0 .5h6" stroke="#ffffff" />
            <path d="M0 3h6L3 6z" fill="#ffffff" />
          </Icon>
        </BarButton>
        <Title>ViewCompanion Premium - [ps2board.pdf]</Title>
        <BarButton $w={38} aria-label="Ribbon display options">
          <Icon s={14}>
            <path d="M.5 1.500h13v10H.500zM.5 4h13M7 10.500V6M5 7.500L7 5.500l2 2" stroke="#ffffff" strokeWidth="1.200" />
          </Icon>
        </BarButton>
        <BarButton $w={38} aria-label="Full screen">
          <Icon>
            <path d="M.5.500h15v15H.500zM3.500 3.500h9v9h-9zM5.500 6h5M5.500 8h5M5.500 10h5" stroke="#ffffff" />
            <path d="M8 0v3M8 13v3M0 8h3M13 8h3M1 1l2.500 2.500M15 1l-2.500 2.500M1 15l2.500-2.500M15 15l-2.500-2.500" stroke="#ffffff" />
          </Icon>
        </BarButton>
        <BarButton $w={48} aria-label="Minimize">
          <Icon s={10}>
            <path d="M.5 6.500h9" stroke="#ffffff" />
          </Icon>
        </BarButton>
        <BarButton $w={47} aria-label="Maximize">
          <Icon s={10}>
            <path d="M.5 1.500h9v8H.5z" stroke="#ffffff" />
          </Icon>
        </BarButton>
        <BarButton $w={47} aria-label="Close">
          <Icon s={10}>
            <path d="M.5.500l9 9M9.500.500l-9 9" stroke="#ffffff" />
          </Icon>
        </BarButton>
      </TitleBar>

      <MenuBar>
        <MenuTab $wide>File</MenuTab>
        <MenuTab>Home</MenuTab>
        <MenuTab>Markup</MenuTab>
        <MenuTab>Tools</MenuTab>
        <MenuTab $active>Premium Tools</MenuTab>
        <MenuTab>Settings</MenuTab>
        <MenuTab>Help</MenuTab>
        <MenuEnd>
          <Icon s={14}>
            <path d="M1 .5h12v13H1z" fill="#ffffff" stroke="#3f76ae" />
            <path d="M1 0h12v3H1zM1 7h12v3H1z" fill="#3f76ae" />
          </Icon>
          <Chevron />
        </MenuEnd>
      </MenuBar>

      <Ribbon>
        {ribbon.map((g) => (
          <Group key={g.label}>
            <GroupRow>
              {g.tools.map((t, i) =>
                t === "sep" ? (
                  <Divider key={i} />
                ) : (
                  <Tool key={i} $w={t.w} $on={t.on} disabled={t.off}>
                    <Icon s={32}>{ribbonIcons[t.icon]}</Icon>
                    <ToolText>
                      {t.lines.map((line, n) => (
                        <ToolLine key={n}>
                          {line}
                          {t.drop && n === t.lines.length - 1 && <Chevron />}
                        </ToolLine>
                      ))}
                    </ToolText>
                  </Tool>
                ),
              )}
            </GroupRow>
            <GroupLabel>{g.label}</GroupLabel>
          </Group>
        ))}
      </Ribbon>

      <Workspace>
        <Dock>
          <Panel $grow>
            <Header title="Pages" />
            <Strip items={pageTools} />
            <Thumbs>
              <Thumb>
                <ThumbPage>
                  <svg width="208" height="154" viewBox="395 176 770 568" aria-hidden="true">
                    <Drawing />
                  </svg>
                </ThumbPage>
                <figcaption>
                  Page 1<br />
                  575 x 400 mm
                </figcaption>
              </Thumb>
            </Thumbs>
          </Panel>
          <SplitBar $h={5} />
          <Panel>
            <Header title="Layers" />
            <Strip items={layerTools} />
            <LayerBox>
              <LayerTable>
                <thead>
                  <tr>
                    <th>Layer Names</th>
                    <th aria-label="State" />
                  </tr>
                </thead>
                <tbody>
                  {layerNames.map((n) => (
                    <tr key={n}>
                      <td colSpan={2}>
                        <CheckLabel>
                          <Check defaultChecked />
                          {n}
                        </CheckLabel>
                      </td>
                    </tr>
                  ))}
                </tbody>
              </LayerTable>
            </LayerBox>
            <DockTabs>
              <DockTab $on>
                <Icon>
                  <path d={stackPath} fill="#2f6fae" />
                </Icon>
                Layers
              </DockTab>
              <DockTab>
                <Icon>
                  <path d="M11 0l4.500 4.500L5 15v-4H1z" fill="#d24a33" />
                </Icon>
                Bookmarks
              </DockTab>
            </DockTabs>
          </Panel>
        </Dock>

        <Center>
          <DocTabs>
            <ArrowButton aria-label="Previous tabs">
              <Icon s={8}>
                <path d="M6 .5v7L1.500 4z" stroke="#222222" />
              </Icon>
            </ArrowButton>
            <DocTab>
              ps2board.pdf
              <PanelButton aria-label="Close ps2board.pdf">
                <Cross />
              </PanelButton>
            </DocTab>
            <ArrowButton aria-label="Next tabs">
              <Icon s={8}>
                <path d="M2 .5v7L6.500 4z" stroke="#222222" />
              </Icon>
            </ArrowButton>
          </DocTabs>
          <ViewFrame>
            <View>
              <Sheet>
                <svg width="764" height="532" viewBox="398 194 764 532" role="img" aria-label="Board contour drawing">
                  <Drawing detail />
                </svg>
              </Sheet>
            </View>
          </ViewFrame>
          <SplitBar $h={10} />
          <Panel>
            <Header title="Markup Element List" right={5} />
            <Strip items={markupTools} />
            <ListBox>
              <ElementTable>
                <colgroup>
                  {columns.map(([n, w]) => (
                    <col key={n} width={w} />
                  ))}
                </colgroup>
                <thead>
                  <tr>
                    {columns.map(([n]) => (
                      <th key={n}>{n}</th>
                    ))}
                  </tr>
                </thead>
              </ElementTable>
            </ListBox>
          </Panel>
        </Center>

        <SideTabs>
          <SideTab>
            <Icon>
              <path d="M.5 1.500h15v13H.500z" fill="#ffffff" stroke="#777777" />
              <path d="M0 1h16v3H0z" fill="#2f6fae" />
              <path d="M1 5h3v9H1z" fill="#eeb0a8" />
              <path d="M4.500 5v9M8.500 5v9M12.500 5v9" stroke="#cccccc" />
            </Icon>
            <SideText>Project</SideText>
          </SideTab>
          <SideTab>
            <Icon>
              <path d="M1 1.500h14v9H7l-3 4v-4H1z" fill="#ffffff" stroke="#555555" />
              <path d="M3 4.500h10M3 7.500h10" stroke="#777777" />
            </Icon>
            <SideText>Markup Properties</SideText>
          </SideTab>
        </SideTabs>

        <Tooltip role="tooltip">
          <Icon s={34} box={33}>
            <CadMark />
          </Icon>
          <TipBody>
            <TipTitle>PDF to CAD</TipTitle>
            Convert from PDF to editable
            <br />
            CAD formats
          </TipBody>
        </Tooltip>
      </Workspace>

      <StatusBar>
        <StatusText $w={138}>Press F1 for Help</StatusText>
        <StatusText $w={150}>22.482, 15.867</StatusText>
        <StatusText $w={198}>575 x 400 mm</StatusText>
        <StatusButton aria-label="Certificate">
          <Icon>
            <path d="M2.500.500h11v15h-11z" fill="#b9b9b9" stroke="#4d8f76" />
            <path d="M4.500 4.500h7M9 12l2-1 1 1" stroke="#777777" />
            <path d="M6 7.500l2 3-2 3-2-3z" fill="#c9402f" />
          </Icon>
        </StatusButton>
        <StatusButton $on aria-label="PDF mode">
          <Icon>
            <path d="M4 0h7l4 4v12H4z" fill="#c4c4c4" />
            <path d="M1 3h10v10H1z" fill="#a81f1f" />
            <path d="M3 11l3-6 3 6M4 9h4" stroke="#ffffff" />
          </Icon>
        </StatusButton>
        <StatusButton $on aria-label="Magnifier">
          <Icon>
            <circle cx="7" cy="6.500" r="5.500" stroke="#1976e8" strokeWidth="2" />
            <path d="M11 10.500l5 5" stroke="#1976e8" strokeWidth="2.400" />
          </Icon>
        </StatusButton>
        <StatusButton aria-label="Continuous view">
          <Icon>
            <path d="M1 0h11v7H1zM1 9h11v7H1z" fill="#ffffff" />
            <path d="M1 .5h11M1 7h11M1 9h11M1 15.500h11M15 1v14" stroke="#1976e8" />
          </Icon>
        </StatusButton>
        <StatusButton aria-label="Crosshair">
          <Icon s={14}>
            <path d="M7 1v12M1 7h12" stroke="#1976e8" strokeWidth="2" />
          </Icon>
        </StatusButton>
        <StatusEnd>
          <StatusButton $on aria-label="Snap">
            <Icon>
              <path d="M3 0v11M1.500 11.500h4v4h-4zM7 9l5-5M7 6v3.500h3.500" stroke="#1976e8" strokeWidth="1.200" />
              <path d="M12.500 0v7M9 3.500h7" stroke="#1976e8" strokeWidth="1.500" />
            </Icon>
          </StatusButton>
          <StatusButton aria-label="Orthogonal">
            <Icon>
              <path d="M3 1v14h12M3 8.500h6V15" stroke="#1f6ad0" strokeWidth="1.400" />
            </Icon>
          </StatusButton>
          <Field label="Scale" value="1 : 1" w={76} />
          <StatusButton aria-label="Snap settings">
            <Icon s={12}>
              <circle cx="6" cy="6" r="5.500" fill="#ffffff" />
              <path d="M8 3.500H5L4.500 6c3-1 4 .5 3 2-.8 1-2.500.800-3.500 0" stroke="#235fae" strokeWidth="1.300" />
            </Icon>
          </StatusButton>
          <Field label="Units" value="Inch" w={86} />
          <StatusText $w={14} />
          <Field label="Zoom" value="35.12%" w={76} />
          <StatusText $w={7} />
          <Icon s={10}>
            <path d="M1 5.500h8" stroke="#bdbdbd" strokeWidth="1.500" />
          </Icon>
          <Zoom aria-label="Zoom level" min={0} max={100} defaultValue={3} />
          <Icon s={10}>
            <path d="M1 5h8M5 1v8" stroke="#bdbdbd" strokeWidth="1.500" />
          </Icon>
          <StatusText $w={8} />
          <Icon s={10}>
            <path d="M8 0h2v2H8zM4 4h2v2H4zM8 4h2v2H8zM0 8h2v2H0zM4 8h2v2H4zM8 8h2v2H8z" fill="#bdbdbd" />
          </Icon>
        </StatusEnd>
      </StatusBar>
    </Window>
  );
}
